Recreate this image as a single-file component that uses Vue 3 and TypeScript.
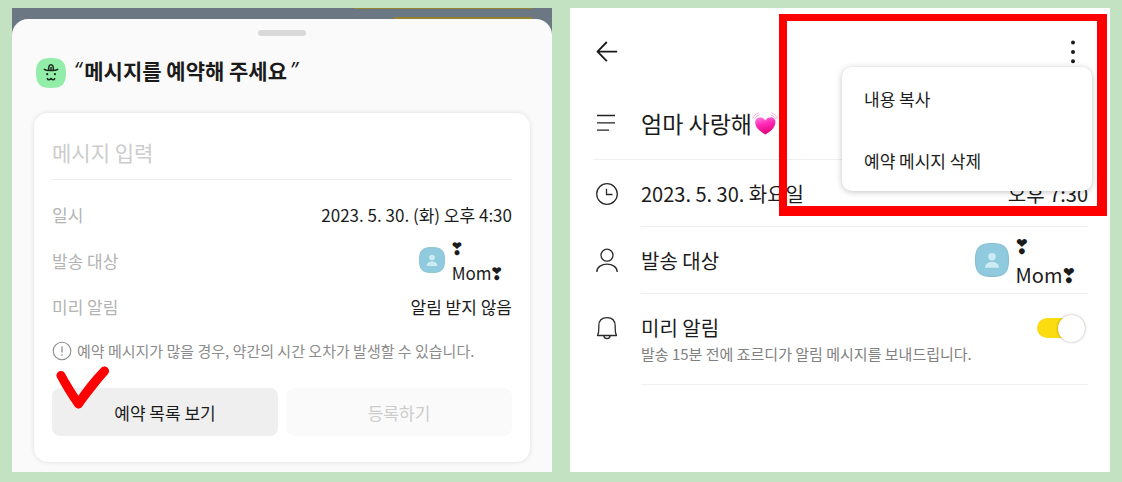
<script setup lang="ts">
import { ref } from 'vue'

const message = ref('')
const reminder = ref(true)
const menuItems: string[] = ['내용 복사', '예약 메시지 삭제']
</script>

<template>
  <main class="page">
    <section class="panel chat">
      <div class="backdrop">
        <div class="bubble wide"></div>
        <div class="bubble narrow"></div>
      </div>
      <div class="sheet">
        <div class="handle"></div>
        <header class="sheet-head">
          <svg class="bot" viewBox="0 0 30 30" aria-hidden="true">
            <path d="M15 0C26 0 30 4 30 15S26 30 15 30 0 26 0 15 4 0 15 0Z" fill="#92eda8" />
            <g fill="none" stroke="#1d2b20" stroke-width="1.5" stroke-linecap="round" stroke-linejoin="round">
              <path d="M8.3 11.4C10 12.8 12 12.6 15 12.6S20 12.8 21.7 11.4" />
              <path d="M12.7 12.2C12.4 8.5 13.2 6.7 15 6.7S17.6 8.5 17.3 12.2" />
              <path d="M15 9.6V12" />
              <path d="M11.3 20.6C12 22.3 14 22.2 15 20.3C16 22.2 18 22.3 18.7 20.6" />
            </g>
            <circle cx="11.2" cy="16.2" r="1.1" fill="#1d2b20" />
            <circle cx="18.9" cy="16.2" r="1.1" fill="#1d2b20" />
          </svg>
          <h1><span class="quote">“</span><b>메시지를 예약해 주세요</b><span class="quote">”</span></h1>
        </header>

        <form class="card" @submit.prevent>
          <input v-model="message" class="message" type="text" placeholder="메시지 입력" aria-label="메시지 입력" />
          <dl class="fields">
            <div class="field">
              <dt>일시</dt>
              <dd>2023. 5. 30. (화) 오후 4:30</dd>
            </div>
            <div class="field">
              <dt>발송 대상</dt>
              <dd>
                <svg class="avatar" viewBox="0 0 34 34" aria-hidden="true">
                  <path d="M17 .5C29.500 .5 33.500 4.500 33.500 17S29.500 33.500 17 33.500 .5 29.500 .5 17 4.500 .5 17 .5Z" fill="#8fcade" stroke="#80bccf" />
                  <circle cx="17" cy="13.700" r="3.700" fill="#cdebf5" />
                  <path d="M10 24.700C10 17 24 17 24 24.700Z" fill="#cdebf5" />
                </svg>
                <span><span class="mark">❣&#xFE0E;</span>Mom<span class="mark">❣&#xFE0E;</span></span>
              </dd>
            </div>
            <div class="field">
              <dt>미리 알림</dt>
              <dd>알림 받지 않음</dd>
            </div>
          </dl>
          <p class="note">
            <svg viewBox="0 0 20 20" aria-hidden="true">
              <circle cx="10" cy="10" r="8.800" fill="none" stroke="#8c8c8c" stroke-width="1.100" />
              <path d="M10 5.500V11.500" stroke="#8c8c8c" stroke-width="1.300" />
              <circle cx="10" cy="14" r=".8" fill="#8c8c8c" />
            </svg>
            예약 메시지가 많을 경우, 약간의 시간 오차가 발생할 수 있습니다.
          </p>
          <div class="actions">
            <button type="button" class="list">예약 목록 보기</button>
            <button type="submit" class="submit" disabled>등록하기</button>
            <svg class="tick" viewBox="0 0 54 44" aria-hidden="true">
              <path d="M6 10.500Q13 24 23.500 39Q34 22 49.500 6" fill="none" stroke="#fe0000" stroke-width="9" stroke-linecap="round" stroke-linejoin="round" />
              <path d="M6 10.500L23.500 39L49.500 6" fill="none" stroke="#fe0000" stroke-width="8" stroke-linecap="round" stroke-linejoin="round" />
            </svg>
          </div>
        </form>
      </div>
    </section>

    <section class="panel detail">
      <header class="bar">
        <button type="button" class="icon-button" aria-label="뒤로">
          <svg class="icon" viewBox="0 0 28 28">
            <path d="M24.200 13.600H4.500M13.800 4L4.500 13.600L13.800 23.200" fill="none" stroke="#1b1b1b" stroke-width="1.800" stroke-linejoin="round" />
          </svg>
        </button>
        <button type="button" class="icon-button" aria-label="더보기">
          <svg class="icon" viewBox="0 0 28 28" fill="#1b1b1b">
            <circle cx="14" cy="4.500" r="2" />
            <circle cx="14" cy="14" r="2" />
            <circle cx="14" cy="23.300" r="2" />
          </svg>
        </button>
        <div class="menu" role="menu">
          <button v-for="item in menuItems" :key="item" type="button" role="menuitem">{{ item }}</button>
        </div>
      </header>

      <div class="row title">
        <svg class="icon" viewBox="0 0 28 28" aria-hidden="true">
          <path d="M4 6.500H22M4 13.800H22M4 21.200H16" stroke="#222" stroke-width="1.300" />
        </svg>
        <h2>
          엄마 사랑해
          <svg class="heart" viewBox="0 0 26 26" role="img" aria-label="두근거리는 하트">
            <defs>
              <linearGradient id="heart-fill" x1="0" y1="0" x2="0.300" y2="1">
                <stop offset="0" stop-color="#ff7fe0" />
                <stop offset="0.500" stop-color="#ff28b4" />
                <stop offset="1" stop-color="#e3067c" />
              </linearGradient>
            </defs>
            <path d="M13.300 24.500C8 21.500 3.200 17.500 3.200 12.300C3.200 7.200 10.200 5.600 13.300 10.400C16.200 5.400 23.400 6.600 23.400 12C23.400 17.500 18.600 21.500 13.300 24.500Z" fill="url(#heart-fill)" />
            <g fill="none" stroke="#f5a3cd" stroke-width=".9" stroke-linecap="round">
              <path d="M.6 8.200Q1.800 4.200 6.600 2.800M2.400 8.800Q3.800 6 7.200 5M25.400 8.200Q24.200 4.200 19.600 2.800M23.800 8.800Q22.400 6 19 5" />
            </g>
          </svg>
        </h2>
      </div>

      <div class="row">
        <svg class="icon" viewBox="0 0 28 28" aria-hidden="true">
          <g fill="none" stroke="#2b2b2b" stroke-width="1.300">
            <circle cx="14" cy="14" r="10.300" />
            <path d="M13.500 8.700V14.500H19.500" />
          </g>
        </svg>
        <div class="content">
          <span>2023. 5. 30. 화요일</span>
          <span>오후 7:30</span>
        </div>
      </div>

      <div class="row">
        <svg class="icon" viewBox="0 0 28 28" aria-hidden="true">
          <g fill="none" stroke="#2b2b2b" stroke-width="1.300">
            <circle cx="14" cy="8.200" r="6" />
            <path d="M3.800 25C3.800 14.500 24.200 14.500 24.200 25" />
          </g>
        </svg>
        <div class="content">
          <span>발송 대상</span>
          <span class="person">
            <svg class="avatar large" viewBox="0 0 34 34" aria-hidden="true">
              <path d="M17 .5C29.500 .5 33.500 4.500 33.500 17S29.500 33.500 17 33.500 .5 29.500 .5 17 4.500 .5 17 .5Z" fill="#8fcade" stroke="#80bccf" />
              <circle cx="17" cy="13.700" r="3.700" fill="#cdebf5" />
              <path d="M10 24.700C10 17 24 17 24 24.700Z" fill="#cdebf5" />
            </svg>
            <span><span class="mark">❣&#xFE0E;</span>Mom<span class="mark">❣&#xFE0E;</span></span>
          </span>
        </div>
      </div>

      <div class="row reminder">
        <svg class="icon" viewBox="0 0 28 28" aria-hidden="true">
          <g fill="none" stroke="#2b2b2b" stroke-width="1.300" stroke-linejoin="round">
            <path d="M4.500 21.500C6.200 18.500 5.800 15.500 5.800 12C5.800 6.500 9 3.700 14 3.700S22.200 6.500 22.200 12C22.200 15.500 21.800 18.500 23.500 21.500Z" />
            <path d="M10.800 21.700C11.300 25.700 16.700 25.700 17.200 21.700" />
          </g>
        </svg>
        <div class="content">
          <label for="reminder">미리 알림<small>발송 15분 전에 죠르디가 알림 메시지를 보내드립니다.</small></label>
          <input id="reminder" v-model="reminder" class="toggle" type="checkbox" role="switch" />
        </div>
      </div>

      <div class="highlight"></div>
    </section>
  </main>
</template>

<style>
body {
  margin: 0;
  background: #c2e2c2;
}
</style>

<style scoped>
* {
  box-sizing: border-box;
}

.page {
  display: grid;
  grid-template-columns: 1fr 1fr;
  gap: 18px;
  min-height: 100vh;
  padding: 8px 12px 10px;
  background: #c2e2c2;
  color: #1b1b1b;
  font-family: "Noto Sans CJK KR", "Noto Sans", sans-serif;
}

.page button,
.page input {
  font-family: inherit;
}

.panel {
  position: relative;
  display: flex;
  flex-direction: column;
  min-width: 0;
}

.chat {
  background: #6b7783;
}

.backdrop {
  display: flex;
  flex-direction: column;
  justify-content: space-between;
  align-items: flex-end;
  height: 11px;
  padding-right: 20px;
}

.bubble {
  background: #92842f;
}

.wide {
  width: 178px;
  height: 1px;
}

.narrow {
  width: 138px;
  height: 2px;
}

.sheet {
  flex: 1;
  padding: 11px 22px 10px;
  border-radius: 16px 16px 0 0;
  background: #fafafa;
}

.handle {
  width: 48px;
  height: 6px;
  margin: 0 auto;
  border-radius: 3px;
  background: #d9d9d9;
}

.sheet-head {
  display: flex;
  gap: 8px;
  padding: 18px 2px 25px;
}

.bot {
  width: 30px;
  height: 30px;
  margin-top: 4px;
}

h1 {
  display: flex;
  gap: 3px;
  margin: 0;
  font-size: 21px;
  line-height: 32px;
  font-weight: 400;
}

h1 b {
  font-weight: 600;
}

.quote {
  font-family: "Open Sans", "Liberation Sans", sans-serif;
  font-style: italic;
}

.card {
  padding: 18px 18px 26px;
  border-radius: 14px;
  background: #fff;
  box-shadow: 0 0 5px rgba(0, 0, 0, 0.12);
}

.message {
  display: block;
  width: 100%;
  height: 49px;
  padding: 0 0 6px;
  border: 0;
  border-bottom: 1px solid #ececec;
  outline: 0;
  background: transparent;
  font-size: 21px;
}

.message::placeholder {
  color: #ccc;
  opacity: 1;
}

.fields {
  margin: 0;
  padding-top: 11px;
  font-size: 17px;
}

.field {
  display: flex;
  justify-content: space-between;
  align-items: center;
  height: 46px;
}

dt {
  color: #b3b3b3;
}

dd {
  display: flex;
  align-items: center;
  gap: 7px;
  margin: 0;
}

.avatar {
  width: 26px;
  height: 26px;
}

.avatar.large {
  width: 34px;
  height: 34px;
}

.mark {
  margin: 0 -2px;
  font-family: "DejaVu Sans", sans-serif;
}

.note {
  display: flex;
  align-items: center;
  gap: 5px;
  margin: 11px 0 26px;
  color: #8c8c8c;
  font-size: 15px;
  line-height: 22px;
  white-space: nowrap;
}

.note svg {
  flex: none;
  width: 20px;
  height: 20px;
}

.actions {
  position: relative;
  display: grid;
  grid-template-columns: 1fr 1fr;
  gap: 8px;
}

.actions button {
  height: 48px;
  padding: 0;
  border: 0;
  border-radius: 8px;
  font-size: 17px;
}

.list {
  background: #efefef;
  color: #1b1b1b;
}

.submit {
  background: #fafafa;
  color: #ccc;
}

.tick {
  position: absolute;
  top: -23px;
  left: 3px;
  width: 54px;
  height: 44px;
}

.detail {
  padding: 0 22px 0 23px;
  background: #fff;
}

.bar {
  position: relative;
  display: flex;
  justify-content: space-between;
  align-items: center;
  height: 80px;
  padding-top: 8px;
}

.icon-button {
  display: flex;
  padding: 0;
  border: 0;
  background: transparent;
}

.icon-button + .icon-button {
  margin-right: 1px;
}

.icon {
  flex: none;
  width: 28px;
  height: 28px;
}

.menu {
  position: absolute;
  z-index: 1;
  top: 59px;
  right: -4px;
  display: flex;
  flex-direction: column;
  width: 250px;
  border-radius: 10px;
  background: #fff;
  box-shadow: 0 1px 6px rgba(0, 0, 0, 0.24);
}

.menu button {
  height: 62px;
  padding: 0 22px;
  border: 0;
  background: transparent;
  color: #1b1b1b;
  font-size: 17px;
  text-align: left;
}

.row {
  display: flex;
  align-items: center;
  gap: 20px;
  font-size: 20px;
}

.title {
  height: 72px;
  padding-bottom: 2px;
  border-bottom: 1px solid #eee;
}

h2 {
  display: flex;
  align-items: center;
  margin: 0;
  font-size: 23px;
  font-weight: 400;
  line-height: 32px;
}

.heart {
  width: 26px;
  height: 26px;
}

.content {
  display: flex;
  flex: 1;
  justify-content: space-between;
  align-items: center;
  height: 67px;
  border-bottom: 1px solid #eee;
}

.person {
  display: flex;
  align-items: center;
  gap: 7px;
}

.reminder {
  align-items: flex-start;
}

.reminder .icon {
  margin-top: 20px;
}

.reminder .content {
  align-items: flex-start;
  height: 91px;
  padding-top: 20px;
}

label {
  line-height: 28px;
}

small {
  display: block;
  color: #808080;
  font-size: 15px;
  line-height: 24px;
}

.toggle {
  display: flex;
  align-items: center;
  justify-content: flex-end;
  width: 48px;
  height: 20px;
  margin: 4px 3px 0 0;
  border-radius: 10px;
  background: #ccc;
  appearance: none;
}

.toggle::before {
  content: "";
  flex: none;
  width: 27px;
  height: 27px;
  border-radius: 50%;
  background: #fff;
  box-shadow: 0 0 3px rgba(0, 0, 0, 0.32);
}

.toggle:checked {
  background: #fadc10;
}

.toggle:not(:checked) {
  justify-content: flex-start;
}

.highlight {
  position: absolute;
  z-index: 2;
  top: 6px;
  right: 3px;
  width: 328px;
  height: 202px;
  border: solid #fe0000;
  border-width: 7px 10px 10px 8px;
  pointer-events: none;
}
</style>
